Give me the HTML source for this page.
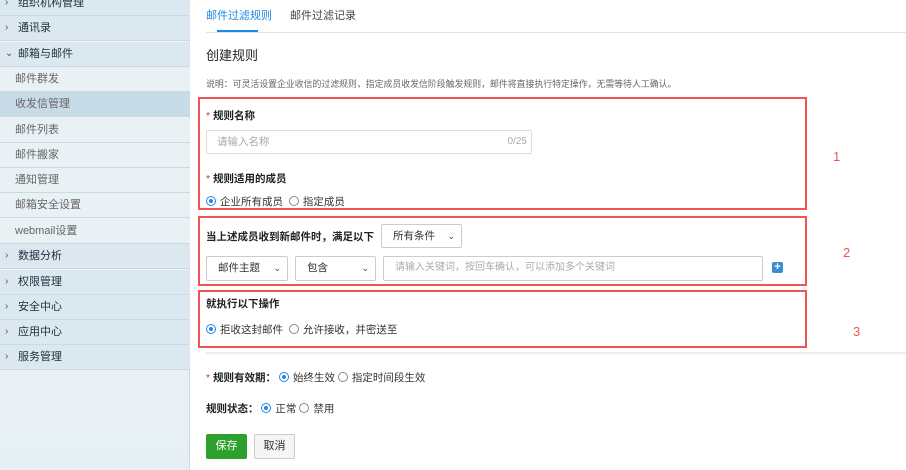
<!DOCTYPE html>
<html><head><meta charset="utf-8"><style>
*{margin:0;padding:0;box-sizing:border-box}
body{width:906px;height:470px;overflow:hidden;background:#fff;font-family:"Liberation Sans","Noto Sans CJK SC",sans-serif;position:relative;color:#333}
.a{position:absolute;white-space:nowrap}
#side{position:absolute;left:0;top:0;width:190px;height:470px;background:linear-gradient(180deg,#f3f7fa,#e6eff5);border-right:1px solid #c9d9e5}
.row{position:absolute;left:0;width:190px;height:25px;border-bottom:1px solid #c9dae6;font-size:11px;line-height:24px}
.top{background:#dce8ef;color:#1f2d3d;padding-left:18px}
.top i{position:absolute;left:5px;font-style:normal;color:#555;font-size:10px}
.sub{background:#e9f1f5;color:#666;padding-left:15px}
.sel{background:#c8dce8}
.tab{font-size:11px;top:7px}
.lbl{font-size:10.5px;font-weight:bold;color:#222}
.req{color:#c33;font-weight:normal}
.rb{display:inline-block;width:10px;height:10px;border:1px solid #888;border-radius:50%;vertical-align:-1px;margin-right:4px;position:relative;background:#fff}
.rb.on{border-color:#1e88e5}
.rb.on:after{content:"";position:absolute;left:2px;top:2px;width:4px;height:4px;border-radius:50%;background:#1e88e5}
.opt{font-size:10.5px;color:#333}
.box{position:absolute;border:2px solid #f05454}
.sel2{position:absolute;border:1px solid #ccc;border-radius:2px;background:#fff;font-size:10.5px;color:#333;padding-left:11px;line-height:22px}
.sel2 b{position:absolute;right:6px;top:0;font-weight:normal;font-size:9px;color:#444}
.num{color:#f05454;font-size:13px}
</style></head><body>
<div id="side">
<div class="row top" style="top:-9px"><i>›</i>组织机构管理</div>
<div class="row top" style="top:16px"><i>›</i>通讯录</div>
<div class="row top" style="top:42px"><i>⌄</i>邮箱与邮件</div>
<div class="row sub" style="top:67px">邮件群发</div>
<div class="row sub sel" style="top:92px">收发信管理</div>
<div class="row sub" style="top:118px">邮件列表</div>
<div class="row sub" style="top:143px">邮件搬家</div>
<div class="row sub" style="top:168px">通知管理</div>
<div class="row sub" style="top:193px">邮箱安全设置</div>
<div class="row sub" style="top:219px">webmail设置</div>
<div class="row top" style="top:244px"><i>›</i>数据分析</div>
<div class="row top" style="top:270px"><i>›</i>权限管理</div>
<div class="row top" style="top:295px"><i>›</i>安全中心</div>
<div class="row top" style="top:320px"><i>›</i>应用中心</div>
<div class="row top" style="top:345px"><i>›</i>服务管理</div>
</div>

<div class="a tab" style="left:206px;color:#1e88e5">邮件过滤规则</div>
<div class="a tab" style="left:290px;color:#444">邮件过滤记录</div>
<div class="a" style="left:206px;top:32px;width:700px;height:1px;background:#e3e3e3"></div>
<div class="a" style="left:217px;top:30px;width:41px;height:2px;background:#1e88e5"></div>
<div class="a" style="left:206px;top:45px;font-size:13px;color:#222">创建规则</div>
<div class="a" style="left:206px;top:77px;font-size:8.9px;color:#666">说明：可灵活设置企业收信的过滤规则，指定成员收发信阶段触发规则，邮件将直接执行特定操作，无需等待人工确认。</div>

<div class="box" style="left:198px;top:97px;width:609px;height:113px"></div>
<div class="a lbl" style="left:206px;top:108px"><span class="req">* </span>规则名称</div>
<div class="a" style="left:206px;top:130px;width:326px;height:24px;border:1px solid #ddd;border-radius:2px;font-size:10.5px;color:#aaa;line-height:22px;padding-left:10px">请输入名称<span style="position:absolute;right:4px;font-size:10px">0/25</span></div>
<div class="a lbl" style="left:206px;top:171px"><span class="req">* </span>规则适用的成员</div>
<div class="a opt" style="left:206px;top:194px"><span class="rb on"></span>企业所有成员 &nbsp;<span class="rb"></span>指定成员</div>

<div class="box" style="left:198px;top:216px;width:609px;height:70px"></div>
<div class="a lbl" style="left:206px;top:229px">当上述成员收到新邮件时，满足以下</div>
<div class="sel2" style="left:381px;top:224px;width:81px;height:24px">所有条件<b>⌄</b></div>
<div class="sel2" style="left:206px;top:256px;width:82px;height:25px">邮件主题<b>⌄</b></div>
<div class="sel2" style="left:295px;top:256px;width:81px;height:25px">包含<b>⌄</b></div>
<div class="sel2" style="left:383px;top:256px;width:380px;height:25px;color:#aaa;font-size:10px">请输入关键词，按回车确认，可以添加多个关键词</div>
<div class="a" style="left:772px;top:262px;width:11px;height:11px;background:#3b8bd5;border-radius:2px;color:#fff;font-size:11px;font-weight:bold;line-height:11px;text-align:center">+</div>

<div class="box" style="left:198px;top:290px;width:609px;height:58px"></div>
<div class="a lbl" style="left:206px;top:296px">就执行以下操作</div>
<div class="a opt" style="left:206px;top:322px"><span class="rb on"></span>拒收这封邮件 &nbsp;<span class="rb"></span>允许接收，并密送至</div>

<div class="a" style="left:205px;top:352px;width:701px;height:2px;background:#eee"></div>
<div class="a lbl" style="left:206px;top:370px"><span class="req">* </span>规则有效期：&nbsp;<span class="opt" style="font-weight:normal"><span class="rb on"></span>始终生效 <span class="rb"></span>指定时间段生效</span></div>
<div class="a lbl" style="left:206px;top:401px">规则状态：&nbsp;<span class="opt" style="font-weight:normal"><span class="rb on"></span>正常 <span class="rb"></span>禁用</span></div>

<div class="a" style="left:206px;top:434px;width:41px;height:25px;background:#2ea02e;border-radius:2px;color:#fff;font-size:11px;line-height:25px;text-align:center">保存</div>
<div class="a" style="left:254px;top:434px;width:41px;height:25px;background:#f5f5f5;border:1px solid #ccc;border-radius:2px;color:#333;font-size:11px;line-height:23px;text-align:center">取消</div>

<div class="a num" style="left:833px;top:149px">1</div>
<div class="a num" style="left:843px;top:245px">2</div>
<div class="a num" style="left:853px;top:324px">3</div>
</body></html>
